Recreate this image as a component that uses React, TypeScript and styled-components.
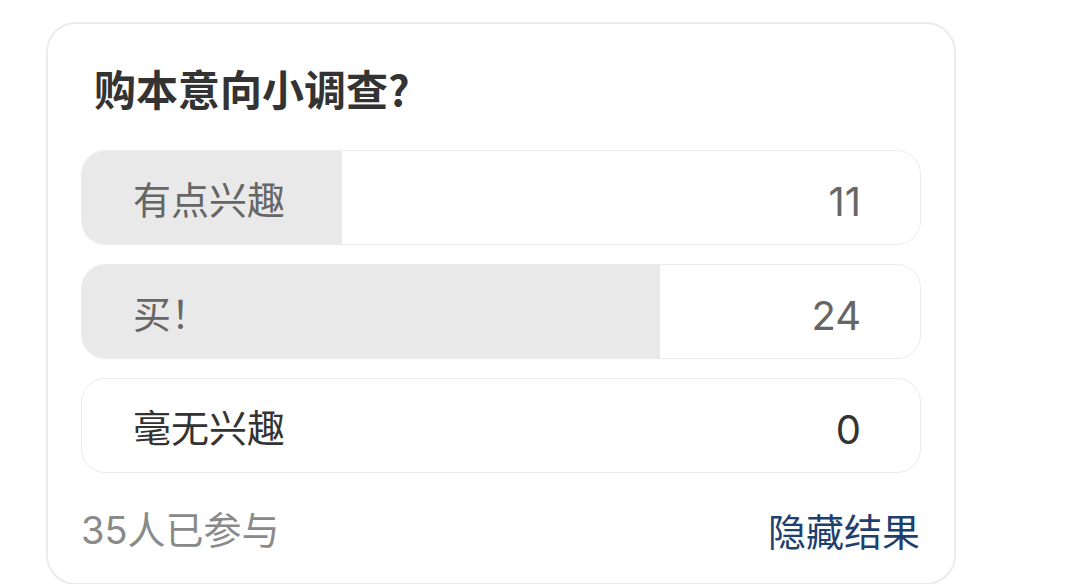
import React from 'react';
import styled, {createGlobalStyle} from 'styled-components';

const GlobalStyle = createGlobalStyle`
  html, body {
    margin: 0;
    padding: 0;
    background: #ffffff;
  }
  body {
    font-family: "Noto Sans CJK SC", "Noto Sans", sans-serif;
  }
`;

const Page = styled.div`
  padding: 22px 0 0 46px;
  width: 1080px;
  height: 584px;
  box-sizing: border-box;
  overflow: hidden;
`;

const Card = styled.div`
  width: 910px;
  box-sizing: border-box;
  border: 2px solid #ebebeb;
  border-radius: 30px;
  padding: 36px 33px 28px 33px;
  background: #fff;
`;

const Title = styled.h3`
  margin: 0 0 0 13px;
  font-size: 42px;
  line-height: 56px;
  font-weight: 700;
  color: #333;
`;

const Options = styled.div`
  margin-top: 34px;
  display: flex;
  flex-direction: column;
  gap: 19px;
`;

const Option = styled.div`
  position: relative;
  height: 95px;
  border: 1px solid #ececec;
  border-radius: 24px;
  overflow: hidden;
  box-sizing: border-box;
  display: flex;
  align-items: center;
  justify-content: space-between;
  padding: 0 59px 0 51px;
`;

const Fill = styled.div`
  position: absolute;
  left: 0;
  top: 0;
  bottom: 0;
  background: #e9e9e9;
`;

const Label = styled.span<{ $muted: boolean }>`
  position: relative;
  font-size: 38px;
  color: ${p => p.$muted ? '#666' : '#333'};
`;

const Count = styled(Label)`
  font-family: Inter, Roboto, sans-serif;
  font-size: 40px;
  margin-top: 8px;
`;

const Footer = styled.div`
  margin-top: 32px;
  display: flex;
  justify-content: space-between;
  font-size: 38px;
  line-height: 50px;
  > .joined {
    color: #8a8a8a;
    font-family: Inter, "Noto Sans CJK SC", sans-serif;
  }
  > .toggle {
    color: #1f3f6e;
    margin-right: 1px;
  }
`;

const options = [
  {name: '有点兴趣', count: 11},
  {name: '买！', count: 24},
  {name: '毫无兴趣', count: 0},
];

function App() {
  const total = options.reduce((s, o) => s + o.count, 0);
  return (
    <Page>
      <GlobalStyle/>
      <Card>
        <Title>购本意向小调查?</Title>
        <Options>
          {options.map(o => {
            const muted = o.count > 0;
            const percent = Math.round(o.count / total * 100);
            return <Option key={o.name}>
              {percent > 0 && <Fill style={{width: `${percent}%`}}/>}
              <Label $muted={muted}>{o.name}</Label>
              <Count $muted={muted}>{o.count}</Count>
            </Option>;
          })}
        </Options>
        <Footer>
          <span className='joined'>{total}人已参与</span>
          <span className='toggle'>隐藏结果</span>
        </Footer>
      </Card>
    </Page>
  );
}

export default App;
